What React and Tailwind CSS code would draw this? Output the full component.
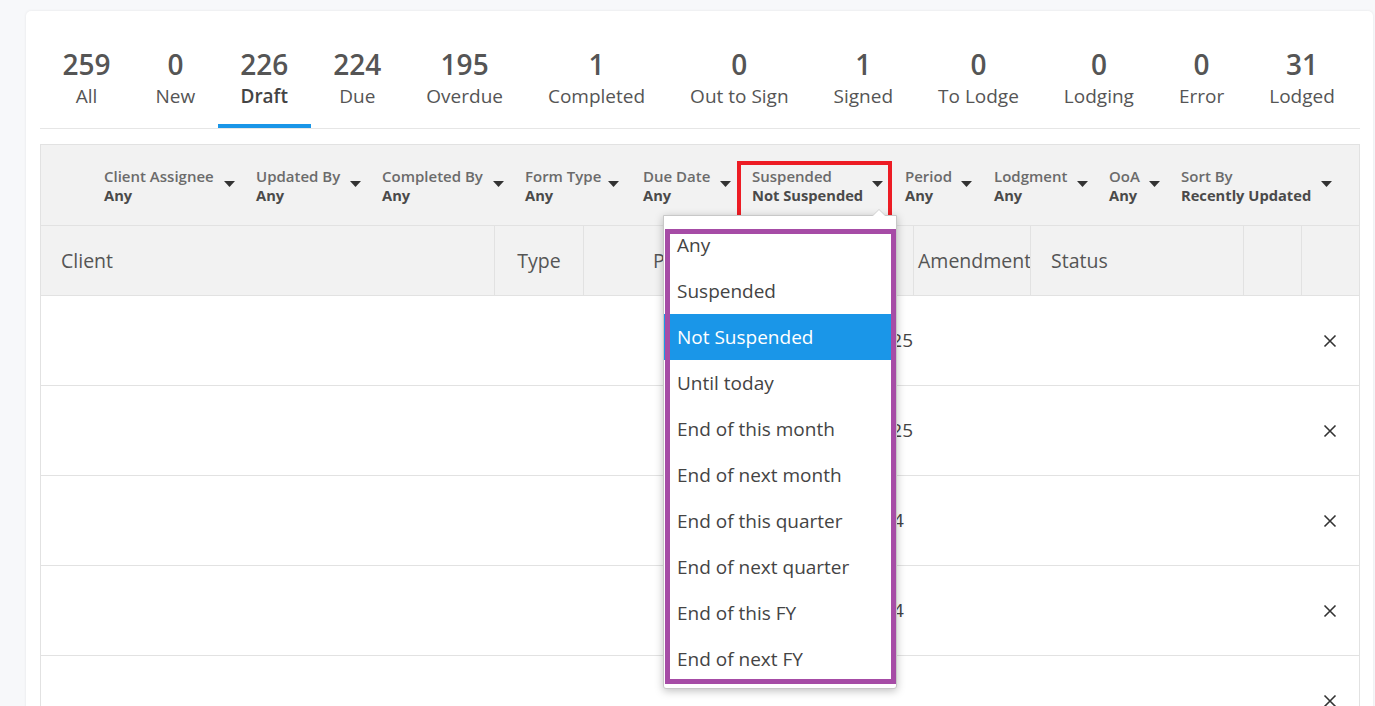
import { useState } from "react"

const tabs = [
  { count: 259, label: "All" },
  { count: 0, label: "New" },
  { count: 226, label: "Draft", active: true },
  { count: 224, label: "Due" },
  { count: 195, label: "Overdue" },
  { count: 1, label: "Completed" },
  { count: 0, label: "Out to Sign" },
  { count: 1, label: "Signed" },
  { count: 0, label: "To Lodge" },
  { count: 0, label: "Lodging" },
  { count: 0, label: "Error" },
  { count: 31, label: "Lodged" },
]

const filters = [
  { label: "Client Assignee", value: "Any", w: "w-[152px]", pr: "pr-[21px]" },
  { label: "Updated By", value: "Any", w: "w-[126px]", pr: "pr-[21px]" },
  { label: "Completed By", value: "Any", w: "w-[143px]", pr: "pr-[21px]" },
  { label: "Form Type", value: "Any", w: "w-[118px]", pr: "pr-[24px]" },
  { label: "Due Date", value: "Any", w: "w-[109px]", pr: "pr-[21px]" },
  { label: "Suspended", value: "Not Suspended", w: "w-[153px]", pr: "pr-[22px]", open: true },
  { label: "Period", value: "Any", w: "w-[89px]", pr: "pr-[22px]" },
  { label: "Lodgment", value: "Any", w: "w-[115px]", pr: "pr-[21px]" },
  { label: "OoA", value: "Any", w: "w-[72px]", pr: "pr-[21px]" },
  { label: "Sort By", value: "Recently Updated", w: "w-[151px]", pr: "pr-0" },
]

const options = [
  "Any",
  "Suspended",
  "Not Suspended",
  "Until today",
  "End of this month",
  "End of next month",
  "End of this quarter",
  "End of next quarter",
  "End of this FY",
  "End of next FY",
]

const rows = [
  { due: "Mar 2025", pad: "pr-[1px]" },
  { due: "Mar 2025", pad: "pr-[1px]" },
  { due: "Jun 2024", pad: "pr-[10px]" },
  { due: "Jun 2024", pad: "pr-[10px]" },
  { due: "", pad: "" },
]

const cols = "grid grid-cols-[454px_89px_197px_133px_117px_213px_58px_1fr]"

const Caret = () => (
  <svg width="11" height="6" viewBox="0 0 11 6" className="shrink-0 mt-[-4px]">
    <path d="M0 0 L11 0 L5.5 6 Z" fill="#333" />
  </svg>
)

const Cross = () => (
  <svg width="14" height="14" viewBox="0 0 14 14">
    <path d="M1.5 1.5 L12.5 12.5 M12.5 1.5 L1.5 12.5" stroke="#333" strokeWidth="1.6" />
  </svg>
)

const App = () => {
  const [selected, setSelected] = useState("Not Suspended")

  return (
    <div
      className="h-[706px] overflow-hidden bg-[#f7f8fa] pt-[11px] pl-[26px] pr-[2px]"
      style={{ fontFamily: "'Open Sans', 'Noto Sans', sans-serif" }}
    >
      <div className="bg-white rounded-[5px] shadow-[0_0_3px_rgba(0,0,0,0.08)] pl-[14px] pr-[13px] pt-[37px] h-[720px]">
        {/* status tabs */}
        <div className="flex border-b border-[#e6e6e6]">
          {tabs.map((t) => (
            <div key={t.label} className="px-[22.5px] flex flex-col items-center relative pb-[19px]">
              <div className="h-[32px] leading-[32px] text-[28px] font-semibold text-[#555]">{t.count}</div>
              <div
                className={`mt-[3px] h-[26px] leading-[26px] text-[19px] whitespace-nowrap ${
                  t.active ? "font-semibold text-[#444]" : "text-[#555]"
                }`}
              >
                {t.label}
              </div>
              {t.active && <div className="absolute left-0 right-0 bottom-0 h-[4px] bg-[#1a96e8]" />}
            </div>
          ))}
        </div>

        {/* filter bar */}
        <div className="relative mt-[15px] h-[82px] bg-[#f2f2f2] border border-[#e2e2e2] flex items-center pl-[63px]">
          {filters.map((f) => (
            <div key={f.label} className={`${f.w} ${f.pr} shrink-0 flex items-center mt-[2px]`}>
              <div className="flex flex-col">
                <span className="text-[15px] leading-[19px] font-semibold text-[#6b6b6b] whitespace-nowrap">
                  {f.label}
                </span>
                <span className="text-[14.7px] leading-[19px] font-bold text-[#4a4a4a] whitespace-nowrap">
                  {f.open ? selected : f.value}
                </span>
              </div>
              <div className="ml-auto pl-[4px]">
                <Caret />
              </div>
            </div>
          ))}

          {/* highlight box around the open filter */}
          <div className="absolute left-[696px] top-[16px] w-[155px] h-[60px] border-[4px] border-[#ed1c24] pointer-events-none" />

          {/* dropdown */}
          <div className="absolute left-[622px] top-[70px] w-[234px] z-10 bg-white border border-[#c8c8c8] rounded-b-[3px] shadow-[0_2px_8px_rgba(0,0,0,0.25)] pt-[6px] pb-[6px]">
            <div className="absolute -top-[7px] left-[208px] w-0 h-0 border-l-[7px] border-r-[7px] border-b-[7px] border-l-transparent border-r-transparent border-b-[#d0d0d0]" />
            <div className="absolute -top-[6px] left-[209px] w-0 h-0 border-l-[6px] border-r-[6px] border-b-[6px] border-l-transparent border-r-transparent border-b-white" />
            {options.map((o) => (
              <div
                key={o}
                onClick={() => setSelected(o)}
                className={`h-[46px] flex items-center pl-[13px] text-[19px] whitespace-nowrap cursor-pointer relative z-20 ${
                  o === selected ? "bg-[#1a96e8] text-white" : "text-[#444]"
                }`}
              >
                {o}
              </div>
            ))}
            <div className="absolute left-[1px] top-[13px] w-[231px] h-[455px] border-[5px] border-[#a64ca6] pointer-events-none z-30" />
          </div>
        </div>

        {/* table */}
        <div className="border-l border-r border-[#e2e2e2]">
          <div className={`${cols} h-[70px] bg-[#f2f2f2] border-b border-[#e2e2e2] text-[19.5px] text-[#555]`}>
            <div className="flex items-center pl-[20px] border-r border-[#e2e2e2]">Client</div>
            <div className="flex items-center justify-center border-r border-[#e2e2e2]">Type</div>
            <div className="flex items-center justify-center">Period</div>
            <div className="flex items-center justify-center border-r border-[#e2e2e2]">Due</div>
            <div className="flex items-center pl-[4px] border-r border-[#e2e2e2] overflow-hidden whitespace-nowrap">
              Amendment
            </div>
            <div className="flex items-center pl-[20px] border-r border-[#e2e2e2]">Status</div>
            <div className="border-r border-[#e2e2e2]" />
            <div />
          </div>
          {rows.map((r, i) => (
            <div key={i} className={`${cols} h-[90px] bg-white border-b border-[#e2e2e2] text-[19px] text-[#444]`}>
              <div />
              <div />
              <div />
              <div className={`flex items-center justify-end overflow-hidden whitespace-nowrap ${r.pad}`}>{r.due}</div>
              <div />
              <div />
              <div />
              <div className="flex items-center justify-center pr-[1px]">
                <Cross />
              </div>
            </div>
          ))}
        </div>
      </div>
    </div>
  )
}

export default App
